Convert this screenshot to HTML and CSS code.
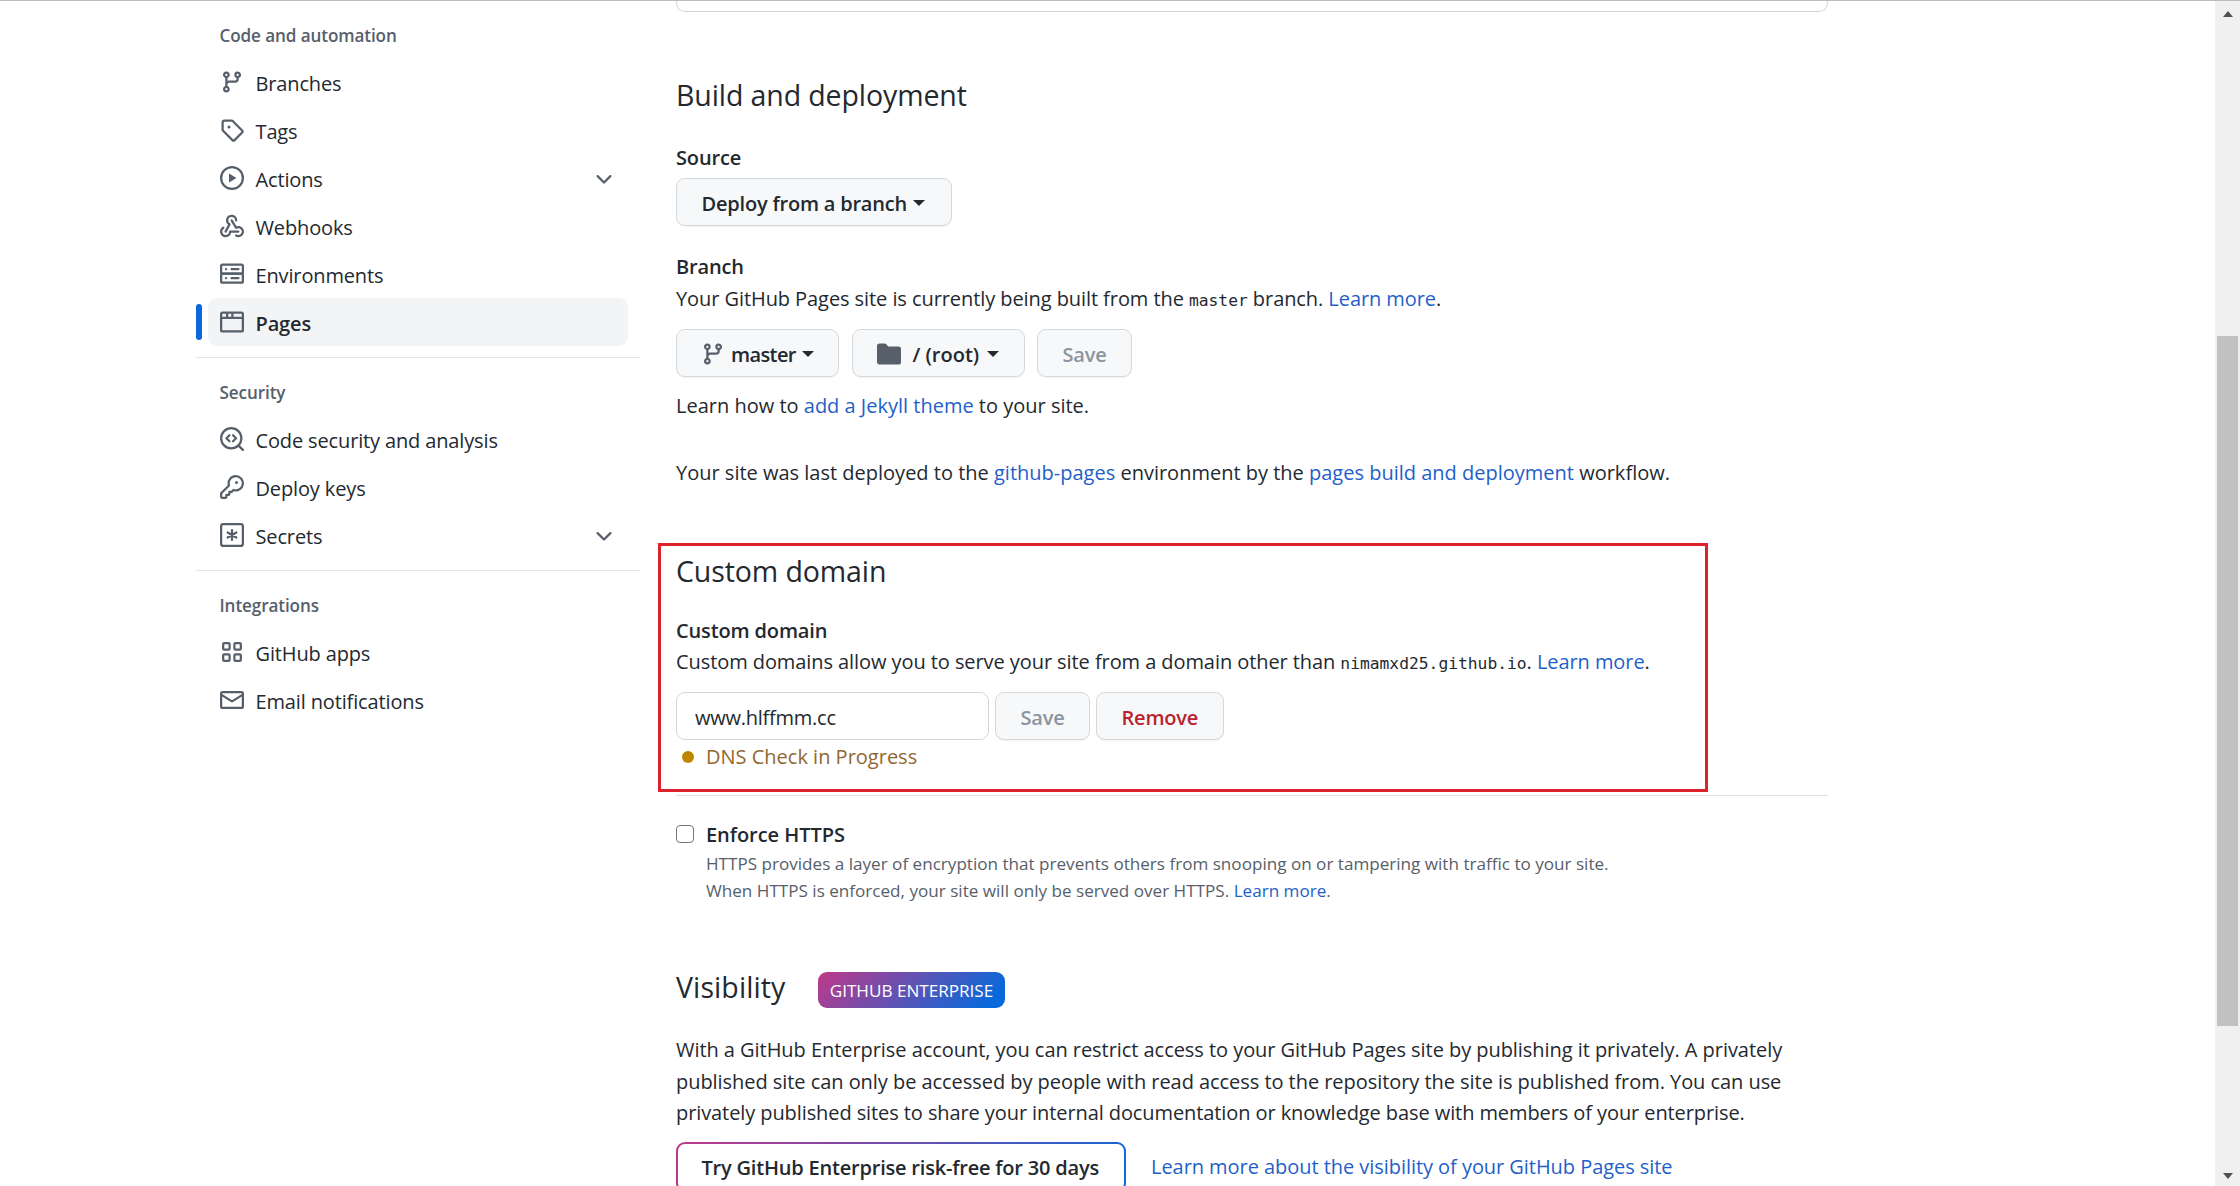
FILE: index.html
```html
<!DOCTYPE html>
<html lang="en">
<head>
<meta charset="utf-8">
<title>Pages settings</title>
<link rel="stylesheet" href="styles.css">
</head>
<body>
<svg width="0" height="0" class="defs" aria-hidden="true">
  <symbol id="branch" viewBox="0 0 16 16"><path fill-rule="evenodd" d="M11.75 2.5a.75.75 0 100 1.5.75.75 0 000-1.5zm-2.25.75a2.25 2.25 0 113 2.122V6A2.5 2.5 0 0110 8.5H6a1 1 0 00-1 1v1.128a2.251 2.251 0 11-1.5 0V5.372a2.25 2.25 0 111.5 0v1.836A2.492 2.492 0 016 7h4a1 1 0 001-1v-.628A2.25 2.25 0 019.5 3.25zM4.25 12a.75.75 0 100 1.5.75.75 0 000-1.5zM3.5 3.25a.75.75 0 111.5 0 .75.75 0 01-1.5 0z"/></symbol>
  <symbol id="chevron" viewBox="0 0 16 16"><path fill-rule="evenodd" d="M12.78 6.22a.75.75 0 010 1.06l-4.25 4.25a.75.75 0 01-1.06 0L3.22 7.28a.75.75 0 011.06-1.06L8 9.94l3.72-3.72a.75.75 0 011.06 0z"/></symbol>
</svg>
<div class="page">
  <nav class="sidebar">
    <section class="group">
      <h3 class="group-title">Code and automation</h3>
      <a class="item"><svg class="icon"><use href="#branch"/></svg><span>Branches</span></a>
      <a class="item"><svg class="icon" viewBox="0 0 16 16"><path fill-rule="evenodd" d="M2.5 7.775V2.75a.25.25 0 01.25-.25h5.025a.25.25 0 01.177.073l6.25 6.25a.25.25 0 010 .354l-5.025 5.025a.25.25 0 01-.354 0l-6.25-6.25a.25.25 0 01-.073-.177zm-1.5 0V2.75C1 1.784 1.784 1 2.75 1h5.025c.464 0 .91.184 1.238.513l6.25 6.25a1.75 1.75 0 010 2.474l-5.026 5.026a1.75 1.75 0 01-2.474 0l-6.25-6.25A1.75 1.75 0 011 7.775zM6 5a1 1 0 100 2 1 1 0 000-2z"/></svg><span>Tags</span></a>
      <a class="item"><svg class="icon" viewBox="0 0 16 16"><path fill-rule="evenodd" d="M1.5 8a6.5 6.5 0 1113 0 6.5 6.5 0 01-13 0zM8 0a8 8 0 100 16A8 8 0 008 0zM6.379 5.227A.25.25 0 006 5.442v5.117a.25.25 0 00.379.214l4.264-2.559a.25.25 0 000-.428L6.379 5.227z"/></svg><span>Actions</span><svg class="icon more"><use href="#chevron"/></svg></a>
      <a class="item"><svg class="icon" viewBox="0 0 16 16"><path d="M5.5 4.25a2.25 2.25 0 014.5 0 .75.75 0 001.5 0 3.75 3.75 0 10-6.14 2.889l-2.272 4.258a.75.75 0 001.324.706L7 7.25a.75.75 0 00-.309-1.015A2.25 2.25 0 015.5 4.25z"/><path d="M7.364 3.607a.75.75 0 011.03.257l2.608 4.349a3.75 3.75 0 11-.628 6.785.75.75 0 01.752-1.299 2.25 2.25 0 10-.033-3.88.75.75 0 01-1.03-.256L7.107 4.636a.75.75 0 01.257-1.03z"/><path d="M2.9 8.776A.75.75 0 012.625 9.8 2.25 2.25 0 106 11.75a.75.75 0 01.75-.751h5.5a.75.75 0 010 1.5H7.425a3.751 3.751 0 11-5.55-3.998.75.75 0 011.024.274z"/></svg><span>Webhooks</span></a>
      <a class="item"><svg class="icon line" viewBox="0 0 16 16"><rect x=".75" y="1.75" width="14.5" height="6" rx="1"/><rect x=".75" y="7.75" width="14.5" height="6" rx="1"/><path d="M7.7 4.75h4.6M7.7 10.75h4.6M4 4.75h.1M4 10.75h.1"/></svg><span>Environments</span></a>
      <a class="item current"><svg class="icon line" viewBox="0 0 16 16"><rect x=".75" y="1.75" width="14.5" height="12.5" rx="1"/><path d="M1 5.25h14M4.75 2v3M8.25 2v3"/></svg><span>Pages</span></a>
    </section>
    <section class="group">
      <h3 class="group-title">Security</h3>
      <a class="item"><svg class="icon line" viewBox="0 0 16 16"><circle cx="7.5" cy="7.5" r="6.75"/><path d="M12.4 12.4l2.85 2.85M6.3 5.5l-2 2 2 2M8.7 5.5l2 2-2 2"/></svg><span>Code security and analysis</span></a>
      <a class="item"><svg class="icon" viewBox="0 0 16 16"><path fill-rule="evenodd" d="M6.5 5.5a4 4 0 112.731 3.795.75.75 0 00-.768.18L7.44 10.5H6.25a.75.75 0 00-.75.75v1.19l-.06.06H4.25a.75.75 0 00-.75.75v1.19l-.06.06H1.75a.25.25 0 01-.25-.25v-1.69l5.024-5.023a.75.75 0 00.181-.768A3.995 3.995 0 016.5 5.5zm4-5.5a5.5 5.5 0 00-5.348 6.788L.22 11.72a.75.75 0 00-.22.53v2C0 15.216.784 16 1.75 16h2a.75.75 0 00.53-.22l.5-.5a.75.75 0 00.22-.53V14h.75a.75.75 0 00.53-.22l.5-.5a.75.75 0 00.22-.53V12h.75a.75.75 0 00.53-.22l.932-.932A5.5 5.5 0 1010.5 0zm.5 6a1 1 0 100-2 1 1 0 000 2z"/></svg><span>Deploy keys</span></a>
      <a class="item"><svg class="icon line" viewBox="0 0 16 16"><rect x=".75" y=".75" width="14.5" height="14.5" rx="1.5"/><path d="M8 4.7v6.6M5.1 6.35l5.8 3.3M5.1 9.65l5.8-3.3"/></svg><span>Secrets</span><svg class="icon more"><use href="#chevron"/></svg></a>
    </section>
    <section class="group">
      <h3 class="group-title">Integrations</h3>
      <a class="item"><svg class="icon line" viewBox="0 0 16 16"><rect x="2.1" y="2.1" width="4.3" height="4.3" rx=".8"/><rect x="9.6" y="2.1" width="4.3" height="4.3" rx=".8"/><rect x="2.1" y="9.6" width="4.3" height="4.3" rx=".8"/><rect x="9.6" y="9.6" width="4.3" height="4.3" rx=".8"/></svg><span>GitHub apps</span></a>
      <a class="item"><svg class="icon line" viewBox="0 0 16 16"><rect x=".75" y="2.75" width="14.5" height="10.5" rx="1"/><path d="M1 4.6l7 4.3 7-4.3"/></svg><span>Email notifications</span></a>
    </section>
  </nav>

  <main class="content">
    <div class="box-end"></div>

    <h2 class="title">Build and deployment</h2>
    <h4 class="label source">Source</h4>
    <div class="row"><button class="btn deploy">Deploy from a branch<i class="caret"></i></button></div>
    <h4 class="label branch-label">Branch</h4>
    <p class="text tight">Your GitHub Pages site is currently being built from the <code>master</code> branch. <a>Learn more</a>.</p>
    <div class="row pickers">
      <button class="btn master"><svg class="icon"><use href="#branch"/></svg>master<i class="caret"></i></button>
      <button class="btn root"><svg class="icon" viewBox="0 0 16 16"><path d="M1.75 1A1.75 1.75 0 000 2.75v10.5C0 14.216.784 15 1.75 15h12.5A1.75 1.75 0 0016 13.25v-8.5A1.75 1.75 0 0014.25 3H7.5a.25.25 0 01-.2-.1l-.9-1.2C6.07 1.26 5.55 1 5 1H1.75z"/></svg>/ (root)<i class="caret"></i></button>
      <button class="btn off">Save</button>
    </div>
    <p class="text jekyll">Learn how to <a>add a Jekyll theme</a> to your site.</p>
    <p class="text deployed">Your site was last deployed to the <a>github-pages</a> environment by the <a>pages build and deployment</a> workflow.</p>

    <section class="domain">
      <div class="highlight"></div>
      <h2 class="title">Custom domain</h2>
      <h4 class="label">Custom domain</h4>
      <p class="text tight">Custom domains allow you to serve your site from a domain other than <code>nimamxd25.github.io</code>. <a>Learn more</a>.</p>
      <div class="row form">
        <input class="field" type="text" value="www.hlffmm.cc">
        <button class="btn off">Save</button>
        <button class="btn danger">Remove</button>
      </div>
      <p class="text status"><i class="dot"></i>DNS Check in Progress</p>
    </section>

    <section class="https">
      <div class="check"></div>
      <div>
        <h4 class="label">Enforce HTTPS</h4>
        <p class="note">HTTPS provides a layer of encryption that prevents others from snooping on or tampering with traffic to your site.<br>When HTTPS is enforced, your site will only be served over HTTPS. <a>Learn more</a>.</p>
      </div>
    </section>

    <div class="visibility"><h2 class="title">Visibility</h2><span class="badge">GITHUB ENTERPRISE</span></div>
    <p class="text about">With a GitHub Enterprise account, you can restrict access to your GitHub Pages site by publishing it privately. A privately<br>published site can only be accessed by people with read access to the repository the site is published from. You can use<br><span class="last">privately published sites to share your internal documentation or knowledge base with members of your enterprise.</span></p>
    <div class="row trial"><button class="btn try">Try GitHub Enterprise risk-free for 30 days</button><a>Learn more about the visibility of your GitHub Pages site</a></div>
  </main>

  <div class="scrollbar"><i class="up"></i><div class="thumb"></div><i class="down"></i></div>
</div>
</body>
</html>
```
FILE: styles.css
```css
* { box-sizing: border-box; }
body {
  margin: 0;
  height: 1186px;
  overflow: hidden;
  background: #fff;
  color: #24292f;
  font: 20px/30px "Open Sans", "Noto Sans", sans-serif;
}
h2, h3, h4, p { margin: 0; }
a { color: #1f5fc9; }
.defs { position: absolute; }
.page {
  display: flex;
  height: 1186px;
  overflow: hidden;
  border-top: 1px solid #bcbcbc;
}
.icon { flex: none; width: 24px; height: 24px; fill: #57606a; }
.line { fill: none; stroke: #57606a; stroke-width: 1.5; stroke-linecap: round; stroke-linejoin: round; }

/* Sidebar */
.sidebar { flex: none; width: 444px; margin: 21px 36px 0 196px; }
.group { padding-bottom: 11px; }
.group + .group { border-top: 1px solid #e4e7ea; padding-top: 21px; }
.group-title {
  padding-left: 23.5px;
  margin-bottom: 9px;
  font-size: 17.1px;
  font-weight: 600;
  line-height: 27px;
  letter-spacing: -.1px;
  color: #57606a;
}
.item {
  position: relative;
  display: flex;
  align-items: center;
  gap: 11.5px;
  height: 48px;
  margin: 0 12px;
  padding: 0 12px;
  border-radius: 9px;
  color: #24292f;
  letter-spacing: -.14px;
}
.item span { padding-top: 3px; }
.more { margin-left: auto; }
.current { background: #f3f4f6; font-weight: 600; }
.current::before {
  content: "";
  position: absolute;
  left: -12px;
  top: 6px;
  width: 6px;
  height: 36px;
  border-radius: 9px;
  background: #0969da;
}

/* Main column */
.content { flex: none; width: 1152px; }
.box-end {
  height: 11px;
  border: 1px solid #d0d7de;
  border-top: 0;
  border-radius: 0 0 9px 9px;
  margin-bottom: 61px;
}
.title { font-size: 28.5px; font-weight: 400; line-height: 44px; letter-spacing: -.1px; }
.label { font-size: 20px; font-weight: 600; letter-spacing: -.14px; }
.text { white-space: nowrap; }
.tight { letter-spacing: -.075px; }
code { font: 16.3px/1 "DejaVu Sans Mono", monospace; letter-spacing: 0; }
.row { display: flex; align-items: center; }
.btn {
  flex: none;
  display: flex;
  align-items: center;
  height: 48px;
  padding: 3px 24.5px 0;
  border: 1px solid #d5d8da;
  border-radius: 9px;
  background: #f6f8fa;
  box-shadow: 0 1.5px 0 rgba(27, 31, 36, .04);
  color: #24292f;
  font: 600 20px/30px "Open Sans", "Noto Sans", sans-serif;
  letter-spacing: -.2px;
}
.caret {
  margin: 0 0 1px 6px;
  border: 6px solid transparent;
  border-top-color: #24292f;
  border-bottom: 0;
}
.off { width: 95px; color: #8c959f; }
.danger { width: 128px; color: #b9232f; }
.deploy { width: 276px; }
.source { margin: 26px 0 5px; }
.branch-label { margin: 26px 0 2px; }
.pickers { gap: 12.5px; margin: 15px 0 14px; }
.btn .icon { margin-top: -2px; }
.master { width: 163px; padding-left: 24px; letter-spacing: -.6px; }
.master .icon { margin-right: 6px; }
.root { width: 173px; padding-left: 24px; letter-spacing: 0; }
.root .icon { margin-right: 12px; }
.root .caret { margin-left: 7.5px; }
.deployed { margin: 37px 0 61px; }

.domain {
  position: relative;
  padding-bottom: 23px;
  border-bottom: 1px solid #d8dee4;
}
.highlight {
  position: absolute;
  left: -18px;
  top: -6px;
  width: 1050px;
  height: 249px;
  border: 3px solid #dc232c;
}
.domain .label { margin: 23px 0 1px; }
.form { gap: 6px; margin: 15px 0 2px; }
.field {
  width: 313px;
  height: 48px;
  padding: 2px 18px 0;
  border: 1px solid #d0d7de;
  border-radius: 9px;
  color: #24292f;
  font: 20px/30px "Open Sans", "Noto Sans", sans-serif;
  letter-spacing: -.25px;
}
.status { display: flex; align-items: center; color: #91672f; }
.dot { width: 12px; height: 12px; margin: 0 12px 0 6px; border-radius: 50%; background: #bf8700; }

.https { display: flex; gap: 12px; margin-top: 23px; }
.https .label { margin-top: 1px; letter-spacing: -.05px; }
.check { width: 18px; height: 18px; margin-top: 6px; border: 1.5px solid #767676; border-radius: 4px; }
.note { font-size: 17.1px; line-height: 27px; color: #57606a; white-space: nowrap; }

.visibility { display: flex; align-items: flex-start; margin-top: 61px; }
.visibility .title { width: 110px; letter-spacing: .1px; }
.badge {
  width: 187px;
  height: 36px;
  margin: 7px 0 0 32px;
  border-radius: 9px;
  background: linear-gradient(135deg, #bf3989, #0969da 90%);
  color: #fff;
  font-size: 17.1px;
  line-height: 37px;
  text-align: center;
}
.about { margin-top: 25px; line-height: 31.5px; letter-spacing: -.05px; }
.last { letter-spacing: -.09px; }
.trial { gap: 25px; margin-top: 13px; white-space: nowrap; letter-spacing: -.05px; }
.try {
  width: 450px;
  height: 50px;
  padding: 2px 23.5px 0;
  border: 2px solid transparent;
  background: linear-gradient(#fff, #fff) padding-box, linear-gradient(135deg, #bf3989, #0969da) border-box;
  box-shadow: none;
}

/* Window scrollbar */
.scrollbar {
  display: flex;
  flex-direction: column;
  align-items: center;
  width: 25px;
  margin-left: auto;
  padding: 10px 0 7px;
  background: #f0f0f0;
}
.thumb { width: 21px; height: 690px; margin-top: 319px; background: #c1c1c1; }
.up, .down { border: 5.5px solid transparent; }
.up { border-top: 0; border-bottom: 6px solid #505050; }
.down { margin-top: auto; border-bottom: 0; border-top: 6px solid #505050; }
```
